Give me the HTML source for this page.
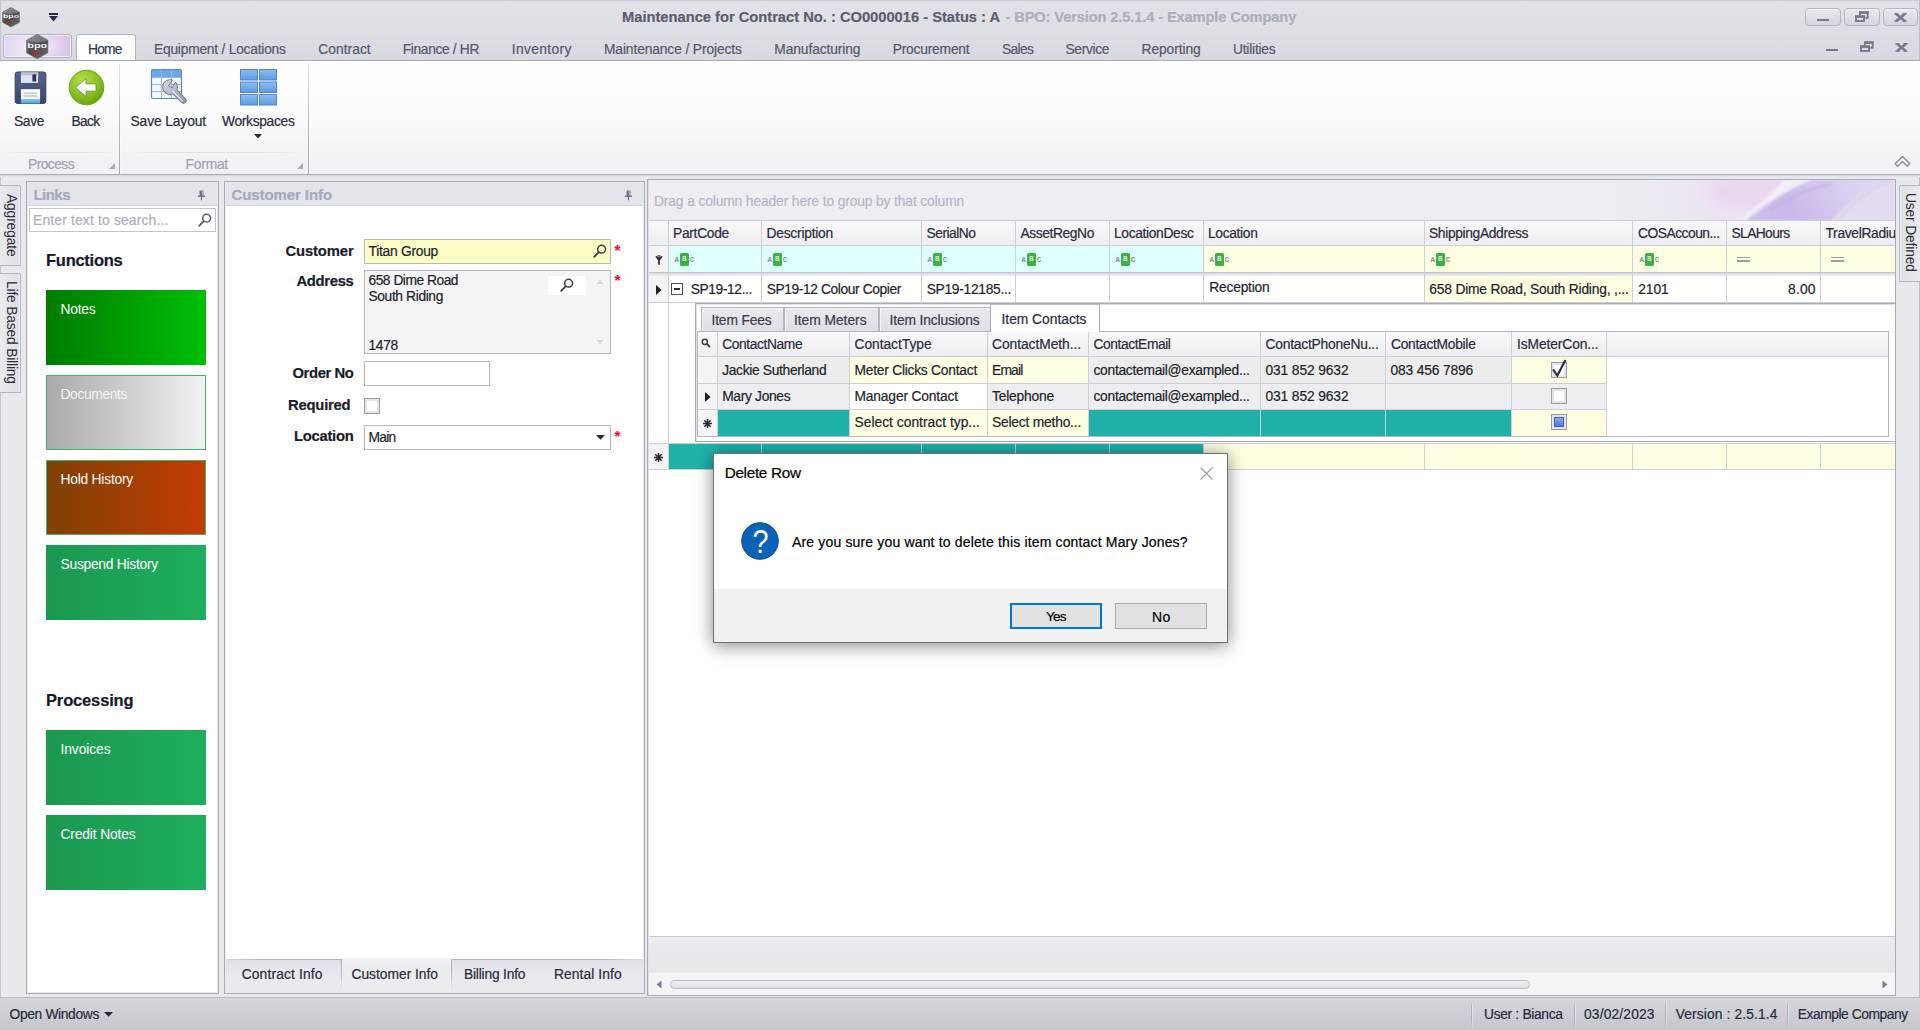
<!DOCTYPE html>
<html><head><meta charset="utf-8"><title>Maintenance for Contract</title>
<style>
*{box-sizing:border-box;margin:0;padding:0}
html,body{width:1920px;height:1030px;overflow:hidden}
body{position:relative;background:#e8e9ed;font-family:"Liberation Sans",sans-serif;font-size:13.3px;color:#1f1f2b;line-height:1}
.a{position:absolute;white-space:nowrap}
.t{position:absolute;white-space:nowrap;line-height:16px;height:16px;-webkit-text-stroke:.2px}
/* SECTION: titlebar */
#title{left:0;top:0;width:1920px;height:61px;background:linear-gradient(#e1e2e7 0,#dedfe4 30px,#d8d9de 60px);border-top:1px solid #c9cad0}
/* SECTION: ribbon */
#ribbon{left:0;top:61px;width:1920px;height:113px;background:linear-gradient(#ffffff 0,#fbfbfc 50px,#eff0f4 113px)}
#ribline{left:0;top:60px;width:1920px;height:1px;background:#a9abb6}
#ribbot{left:0;top:174px;width:1920px;height:1px;background:#a7a9b3}
#ribbot2{left:0;top:175px;width:1920px;height:2px;background:linear-gradient(#d4d5db,#e8e9ed)}
/* SECTION: status */
#status{left:0;top:997px;width:1920px;height:33px;background:linear-gradient(#d6d7dc,#c6c7cd);border-top:1px solid #b9bac2}
</style></head><body>
<div class="a" id="title"></div>
<div class="a" style="left:0px;top:0px;width:1px;height:1030px;background:#c6c7ce"></div><div class="a" style="left:1919px;top:0px;width:1px;height:1030px;background:#c0c1c9"></div><svg class="a" style="left:2px;top:7px" width="18" height="20.5" viewBox="0 0 36 40">
<defs><linearGradient id="h1g" x1="0" y1="0" x2="1" y2="1"><stop offset="0" stop-color="#8a8a8d"/><stop offset=".45" stop-color="#4a4a4d"/><stop offset="1" stop-color="#6b6b6e"/></linearGradient></defs>
<polygon points="18,0.5 35,10 35,30 18,39.5 1,30 1,10" fill="url(#h1g)" stroke="#5c5c60" stroke-width="1"/>
<polygon points="18,0.5 35,10 18,14 1,10" fill="#9a9a9d" opacity=".55"/>
<text x="18" y="22" font-family="Liberation Sans,sans-serif" font-size="11" font-weight="700" fill="#f4f4f4" text-anchor="middle" textLength="32" lengthAdjust="spacingAndGlyphs">bpo</text>
<circle cx="15" cy="29.5" r="3.2" fill="none" stroke="#d8201c" stroke-width="1.6"/>
</svg><div class="a" style="left:49px;top:13px;width:9px;height:2px;background:#2a2a45"></div><svg class="a" style="left:49px;top:15.5px" width="9" height="6" viewBox="0 0 9 6"><path d="M0 0h9L4.5 5.6z" fill="#2a2a45"/></svg><div class="t" style="top:9.0px;left:622.0px;font-size:14.7px;font-weight:700;color:#5b5e70;">Maintenance for Contract No. : CO0000016 - Status : A</div><div class="t" style="top:9.0px;left:1005.5px;font-size:14.7px;font-weight:700;color:#abaebb;letter-spacing:-0.14px;">- BPO: Version 2.5.1.4 - Example Company</div><div class="a" style="left:1805px;top:8px;width:36px;height:18px;border:1px solid #b4b6c0;border-radius:4px;background:linear-gradient(#e9eaee,#d5d6dc);box-shadow:inset 0 1px 0 #f3f3f6"></div><div class="a" style="left:1844px;top:8px;width:36px;height:18px;border:1px solid #b4b6c0;border-radius:4px;background:linear-gradient(#e9eaee,#d5d6dc);box-shadow:inset 0 1px 0 #f3f3f6"></div><div class="a" style="left:1883px;top:8px;width:35px;height:18px;border:1px solid #b4b6c0;border-radius:4px;background:linear-gradient(#e9eaee,#d5d6dc);box-shadow:inset 0 1px 0 #f3f3f6"></div><div class="a" style="left:1817px;top:18.8px;width:12px;height:2.6999999999999993px;background:#767a8c"></div><svg class="a" style="left:1855px;top:10.5px" width="14" height="11" viewBox="0 0 14 11"><path d="M4.900 4V1.500h7.800v5.300h-2.500" fill="none" stroke="#767a8c" stroke-width="1.900"/><rect x="4" y="0.300" width="9.700" height="2.600" fill="#767a8c"/><rect x="1" y="5.500" width="8" height="4.500" fill="none" stroke="#767a8c" stroke-width="1.900"/><rect x="0" y="4.300" width="10" height="2.600" fill="#767a8c"/></svg><svg class="a" style="left:1894.0px;top:12.8px" width="13" height="9" viewBox="0 0 13 9"><path d="M2 0.800L11 8.200M11 0.800L2 8.200" stroke="#767a8c" stroke-width="2.700"/><path d="M0.300 0.800h4M8.700 0.800h4M0.300 8.100h4M8.700 8.100h4" stroke="#767a8c" stroke-width="1.400"/></svg><div class="a" style="left:1826px;top:48.8px;width:12px;height:2.700000000000003px;background:#767a8c"></div><svg class="a" style="left:1860px;top:40.5px" width="14" height="11" viewBox="0 0 14 11"><path d="M4.900 4V1.500h7.800v5.300h-2.500" fill="none" stroke="#767a8c" stroke-width="1.900"/><rect x="4" y="0.300" width="9.700" height="2.600" fill="#767a8c"/><rect x="1" y="5.500" width="8" height="4.500" fill="none" stroke="#767a8c" stroke-width="1.900"/><rect x="0" y="4.300" width="10" height="2.600" fill="#767a8c"/></svg><svg class="a" style="left:1895.0px;top:42.8px" width="13" height="9" viewBox="0 0 13 9"><path d="M2 0.800L11 8.200M11 0.800L2 8.200" stroke="#767a8c" stroke-width="2.700"/><path d="M0.300 0.800h4M8.700 0.800h4M0.300 8.100h4M8.700 8.100h4" stroke="#767a8c" stroke-width="1.400"/></svg><div class="a" style="left:3px;top:34px;width:69px;height:24px;border:1px solid #b2b4c2;border-radius:3px;background:radial-gradient(ellipse 30px 14px at 50% 55%,#f3ecf8 0,rgba(243,236,248,0) 100%),linear-gradient(100deg,#ded4ef 0,#e9e0f4 30%,#e2cfee 70%,#d9c2e8 100%);box-shadow:inset 0 0 0 1px #f1ebf7"></div><svg class="a" style="left:26px;top:34px" width="22.5" height="25" viewBox="0 0 36 40">
<defs><linearGradient id="h2g" x1="0" y1="0" x2="1" y2="1"><stop offset="0" stop-color="#8a8a8d"/><stop offset=".45" stop-color="#4a4a4d"/><stop offset="1" stop-color="#6b6b6e"/></linearGradient></defs>
<polygon points="18,0.5 35,10 35,30 18,39.5 1,30 1,10" fill="url(#h2g)" stroke="#5c5c60" stroke-width="1"/>
<polygon points="18,0.5 35,10 18,14 1,10" fill="#9a9a9d" opacity=".55"/>
<text x="18" y="22" font-family="Liberation Sans,sans-serif" font-size="11" font-weight="700" fill="#f4f4f4" text-anchor="middle" textLength="32" lengthAdjust="spacingAndGlyphs">bpo</text>
<circle cx="15" cy="29.5" r="3.2" fill="none" stroke="#d8201c" stroke-width="1.6"/>
</svg><div class="a" style="left:76px;top:34px;width:60px;height:28px;border:1px solid #b0b2be;border-bottom:none;border-radius:3px 3px 0 0;background:#fff"></div><div class="t" style="top:42.2px;left:88.0px;font-size:13.8px;color:#33375c;letter-spacing:-0.80px;">Home</div><div class="t" style="top:42.2px;left:154.0px;font-size:13.8px;color:#55586b;letter-spacing:-0.23px;">Equipment / Locations</div><div class="t" style="top:42.2px;left:318.3px;font-size:13.8px;color:#55586b;letter-spacing:0.03px;">Contract</div><div class="t" style="top:42.2px;left:402.7px;font-size:13.8px;color:#55586b;letter-spacing:-0.35px;">Finance / HR</div><div class="t" style="top:42.2px;left:511.7px;font-size:13.8px;color:#55586b;letter-spacing:0.36px;">Inventory</div><div class="t" style="top:42.2px;left:604.0px;font-size:13.8px;color:#55586b;letter-spacing:-0.12px;">Maintenance / Projects</div><div class="t" style="top:42.2px;left:774.3px;font-size:13.8px;color:#55586b;letter-spacing:-0.10px;">Manufacturing</div><div class="t" style="top:42.2px;left:892.7px;font-size:13.8px;color:#55586b;letter-spacing:-0.20px;">Procurement</div><div class="t" style="top:42.2px;left:1002.0px;font-size:13.8px;color:#55586b;letter-spacing:-0.64px;">Sales</div><div class="t" style="top:42.2px;left:1065.5px;font-size:13.8px;color:#55586b;letter-spacing:-0.36px;">Service</div><div class="t" style="top:42.2px;left:1141.5px;font-size:13.8px;color:#55586b;letter-spacing:-0.07px;">Reporting</div><div class="t" style="top:42.2px;left:1233.0px;font-size:13.8px;color:#55586b;letter-spacing:-0.22px;">Utilities</div>
<!-- RIBBON -->
<div class="a" id="ribbon"></div><div class="a" id="ribline"></div><div class="a" id="ribbot"></div><div class="a" id="ribbot2"></div>
<div class="a" style="left:119px;top:63px;width:1px;height:111px;background:linear-gradient(#e4e5ea,#b9bbc5 50%,#a9abb6)"></div><div class="a" style="left:120px;top:63px;width:1px;height:111px;background:linear-gradient(#fff,#f6f6f8)"></div><div class="a" style="left:308px;top:63px;width:1px;height:111px;background:linear-gradient(#e4e5ea,#b9bbc5 50%,#a9abb6)"></div><div class="a" style="left:309px;top:63px;width:1px;height:111px;background:linear-gradient(#fff,#f6f6f8)"></div><div class="a" style="left:6px;top:152px;width:108px;height:1px;background:linear-gradient(90deg,rgba(225,226,232,0),#e1e2e8 20%,#e1e2e8 80%,rgba(225,226,232,0))"></div><div class="a" style="left:126px;top:152px;width:177px;height:1px;background:linear-gradient(90deg,rgba(225,226,232,0),#e1e2e8 20%,#e1e2e8 80%,rgba(225,226,232,0))"></div><div class="t" style="top:156.7px;left:28.0px;font-size:13.8px;color:#9ea2b3;letter-spacing:-0.55px;">Process</div><div class="t" style="top:156.7px;left:185.6px;font-size:13.8px;color:#9ea2b3;letter-spacing:-0.22px;">Format</div><svg class="a" style="left:109px;top:163px" width="6" height="6" viewBox="0 0 6 6"><path d="M6 0v6H0z" fill="#a6a9b6"/></svg><svg class="a" style="left:297px;top:163px" width="6" height="6" viewBox="0 0 6 6"><path d="M6 0v6H0z" fill="#a6a9b6"/></svg><div class="t" style="top:114.2px;left:14.0px;font-size:13.8px;color:#2b2b3a;letter-spacing:-0.36px;">Save</div><div class="t" style="top:114.2px;left:71.5px;font-size:13.8px;color:#2b2b3a;letter-spacing:-0.67px;">Back</div><div class="t" style="top:114.2px;left:130.5px;font-size:13.8px;color:#2b2b3a;letter-spacing:-0.11px;">Save Layout</div><div class="t" style="top:114.2px;left:222.0px;font-size:13.8px;color:#2b2b3a;letter-spacing:-0.32px;">Workspaces</div><svg class="a" style="left:254px;top:134px" width="8" height="5" viewBox="0 0 8 5"><path d="M0 0h8L4 4.6z" fill="#2a2a3a"/></svg><svg class="a" style="left:13.500px;top:70.500px" width="33" height="33.500" viewBox="0 0 34 35">
<defs><linearGradient id="fl" x1="0" y1="0" x2="0" y2="1"><stop offset="0" stop-color="#56658c"/><stop offset="1" stop-color="#39456a"/></linearGradient>
<linearGradient id="fl2" x1="0" y1="0" x2="0" y2="1"><stop offset="0" stop-color="#fff"/><stop offset=".7" stop-color="#eef3fb"/><stop offset=".72" stop-color="#7cc0ec"/><stop offset="1" stop-color="#4aa3df"/></linearGradient></defs>
<rect x="1" y="1" width="32" height="33" rx="2.5" fill="url(#fl)" stroke="#303b5e" stroke-width="1"/>
<rect x="7" y="1.5" width="18" height="11" fill="#dfe3ee"/><rect x="7" y="1.5" width="18" height="3" fill="#b9c0d4"/>
<rect x="19" y="3.5" width="4" height="7.5" fill="#2b3556"/>
<rect x="7" y="19" width="20" height="15" fill="url(#fl2)"/>
<rect x="10" y="22.5" width="14" height="1.2" fill="#aab6d0"/><rect x="10" y="25.5" width="14" height="1.2" fill="#aab6d0"/>
</svg><svg class="a" style="left:68px;top:69px" width="37" height="37" viewBox="0 0 37 37">
<defs><radialGradient id="bk" cx=".4" cy=".3" r=".8"><stop offset="0" stop-color="#b9e04a"/><stop offset=".6" stop-color="#86bd24"/><stop offset="1" stop-color="#5f9a12"/></radialGradient></defs>
<circle cx="18.5" cy="18.5" r="17.3" fill="url(#bk)" stroke="#6fa51b" stroke-width="1"/>
<path d="M7.5 18.5L18 9.5v5.3h8.5c1 0 1.5.5 1.5 1.5v4.4c0 1-.5 1.5-1.5 1.5H18v5.3z" fill="#f6fbff" stroke="#5d8f15" stroke-width=".8"/>
</svg><svg class="a" style="left:150px;top:68px" width="38" height="38" viewBox="0 0 38 38">
<defs><linearGradient id="wr" gradientUnits="userSpaceOnUse" x1="12" y1="10" x2="34" y2="34"><stop offset="0" stop-color="#d9dde6"/><stop offset="1" stop-color="#8e96a8"/></linearGradient></defs>
<rect x="1.5" y="1.5" width="30" height="29" rx="1.5" fill="#f4f7fc" stroke="#5d86c8" stroke-width="1.2"/>
<rect x="2" y="2" width="29" height="7" fill="#6ea6e8"/>
<path d="M11.5 2v28M21.5 2v28M2 9.5h29M2 16.5h29M2 23.500h29" stroke="#9bb8e2" stroke-width="1" fill="none"/>
<g transform="translate(0,1)"><path d="M24 22L33.500 31.500" stroke="#6b7388" stroke-width="6.400" stroke-linecap="round" fill="none"/>
<path d="M25.700 13.900A7 7 0 1 1 21.900 11.300L18.100 16.700L21.900 19.300Z" fill="#6b7388" stroke="#6b7388" stroke-width="1.600" stroke-linejoin="round"/>
<path d="M24 22L33.500 31.500" stroke="url(#wr)" stroke-width="4.800" stroke-linecap="round" fill="none"/>
<path d="M25.700 13.900A7 7 0 1 1 21.900 11.300L18.100 16.700L21.900 19.300Z" fill="url(#wr)"/>
<path d="M22.500 22L32.500 32" stroke="#f2f4f8" stroke-width="1.200" stroke-linecap="round" fill="none" opacity=".75"/></g>
</svg><svg class="a" style="left:240px;top:69px" width="37" height="37" viewBox="0 0 37 37">
<defs><linearGradient id="ws" x1="0" y1="0" x2="0" y2="1"><stop offset="0" stop-color="#8dbcf0"/><stop offset="1" stop-color="#5c9be2"/></linearGradient></defs><rect x="0.5" y="0.5" width="17" height="10.500" fill="url(#ws)" stroke="#4f86cf" stroke-width="1"/><rect x="19.5" y="0.5" width="17" height="10.500" fill="url(#ws)" stroke="#4f86cf" stroke-width="1"/><rect x="0.5" y="13.0" width="17" height="10.500" fill="url(#ws)" stroke="#4f86cf" stroke-width="1"/><rect x="19.5" y="13.0" width="17" height="10.500" fill="url(#ws)" stroke="#4f86cf" stroke-width="1"/><rect x="0.5" y="25.5" width="17" height="10.500" fill="url(#ws)" stroke="#4f86cf" stroke-width="1"/><rect x="19.5" y="25.5" width="17" height="10.500" fill="url(#ws)" stroke="#4f86cf" stroke-width="1"/></svg><svg class="a" style="left:1894px;top:154.500px" width="17" height="13" viewBox="0 0 17 13"><path d="M1.200 8.800L8.500 1.500L15.800 8.800L13.300 11.300L8.500 6.500L3.700 11.300Z" fill="#f6f6f9" stroke="#8e90a0" stroke-width="1.500" stroke-linejoin="round"/></svg>
<div class="a" style="left:0px;top:185px;width:21px;height:81px;border:1px solid #b4b6c1;border-left:none;background:linear-gradient(90deg,#e9eaee,#dfe0e6);box-shadow:inset -1px 0 0 #f2f2f5"></div><div class="a" style="left:18.5px;top:194.0px;transform-origin:0 0;transform:rotate(90deg);font-size:13.8px;line-height:16px;height:16px;letter-spacing:-0.13px;color:#2b2b3a">Aggregate</div><div class="a" style="left:0px;top:273px;width:21px;height:120px;border:1px solid #b4b6c1;border-left:none;background:linear-gradient(90deg,#e9eaee,#dfe0e6);box-shadow:inset -1px 0 0 #f2f2f5"></div><div class="a" style="left:18.5px;top:281.0px;transform-origin:0 0;transform:rotate(90deg);font-size:13.8px;line-height:16px;height:16px;letter-spacing:-0.17px;color:#2b2b3a">Life Based Billing</div><div class="a" style="left:1899px;top:185px;width:21px;height:97px;border:1px solid #b4b6c1;border-right:none;background:linear-gradient(90deg,#dfe0e6,#e9eaee);box-shadow:inset 1px 0 0 #f2f2f5"></div><div class="a" style="left:1917.5px;top:193.0px;transform-origin:0 0;transform:rotate(90deg);font-size:13.8px;line-height:16px;height:16px;letter-spacing:-0.15px;color:#2b2b3a">User Defined</div>
<div class="a" style="left:26px;top:181px;width:193px;height:813px;border:1px solid #a9abb6;background:#fff;box-shadow:inset 0 0 0 1px #e9eaee"></div><div class="a" style="left:28px;top:183px;width:189px;height:23px;background:#e4e5ea;border-bottom:1px solid #d5d6dd"></div><div class="t" style="top:187.0px;left:33.5px;font-size:15px;font-weight:700;color:#a3a9c0;letter-spacing:-0.54px;">Links</div><svg class="a" style="left:197px;top:189.5px" width="9" height="11" viewBox="0 0 9 11"><path d="M2.500 0.500h4v5h1.500v1.500H1V5.500h1.500z" fill="#70748a"/><path d="M4.500 7v3.500" stroke="#70748a" stroke-width="1.200"/><path d="M5.500 1v4.500" stroke="#b9bccb" stroke-width="1"/></svg><div class="a" style="left:29px;top:208px;width:187px;height:24px;border:1px solid #c3c5ce;background:#fff"></div><div class="t" style="top:212.7px;left:33.0px;font-size:13.8px;color:#aaaec1;letter-spacing:0.19px;">Enter text to search...</div><svg class="a" style="left:198px;top:213px" width="14" height="14" viewBox="0 0 14 14"><circle cx="8.600" cy="5.200" r="3.900" fill="none" stroke="#55586b" stroke-width="1.500"/><path d="M5.800 8.200L1.200 12.800" stroke="#55586b" stroke-width="1.800" stroke-linecap="round"/></svg><div class="t" style="top:252.0px;left:46.0px;font-size:16.5px;font-weight:700;color:#17172e;letter-spacing:-0.26px;">Functions</div><div class="t" style="top:692.0px;left:46.0px;font-size:16.5px;font-weight:700;color:#17172e;letter-spacing:-0.15px;">Processing</div><div class="a" style="left:46px;top:290px;width:160px;height:75px;background:linear-gradient(90deg,#007b00,#00bf06);"></div><div class="t" style="top:302.0px;left:60.5px;font-size:13.8px;color:#fff;letter-spacing:-0.21px;-webkit-text-stroke:0">Notes</div><div class="a" style="left:46px;top:375px;width:160px;height:75px;background:linear-gradient(90deg,#a9a9a9,#f2f2f2);border:1px solid #3cb371;"></div><div class="t" style="top:387.0px;left:60.5px;font-size:13.8px;color:#f4f4f4;letter-spacing:-0.36px;-webkit-text-stroke:0">Documents</div><div class="a" style="left:46px;top:460px;width:160px;height:75px;background:linear-gradient(90deg,#7d4105,#c43c02);border:1px solid #3cb371;"></div><div class="t" style="top:472.0px;left:60.5px;font-size:13.8px;color:#fff;letter-spacing:-0.22px;-webkit-text-stroke:0">Hold History</div><div class="a" style="left:46px;top:545px;width:160px;height:75px;background:linear-gradient(90deg,#1c9850,#1eae5e);"></div><div class="t" style="top:557.0px;left:60.5px;font-size:13.8px;color:#fff;letter-spacing:-0.25px;-webkit-text-stroke:0">Suspend History</div><div class="a" style="left:46px;top:730px;width:160px;height:75px;background:linear-gradient(90deg,#1c9850,#1eae5e);"></div><div class="t" style="top:742.0px;left:60.5px;font-size:13.8px;color:#fff;letter-spacing:-0.08px;-webkit-text-stroke:0">Invoices</div><div class="a" style="left:46px;top:815px;width:160px;height:75px;background:linear-gradient(90deg,#1c9850,#1eae5e);"></div><div class="t" style="top:827.0px;left:60.5px;font-size:13.8px;color:#fff;letter-spacing:-0.14px;-webkit-text-stroke:0">Credit Notes</div>
<div class="a" style="left:224px;top:181px;width:421px;height:813px;border:1px solid #a9abb6;background:#fff;box-shadow:inset 0 0 0 1px #e9eaee"></div><div class="a" style="left:226px;top:183px;width:417px;height:23px;background:#e4e5ea;border-bottom:1px solid #d5d6dd"></div><div class="t" style="top:187.0px;left:231.5px;font-size:15px;font-weight:700;color:#a3a9c0;letter-spacing:-0.09px;">Customer Info</div><svg class="a" style="left:624px;top:189.5px" width="9" height="11" viewBox="0 0 9 11"><path d="M2.500 0.500h4v5h1.500v1.500H1V5.500h1.500z" fill="#70748a"/><path d="M4.500 7v3.500" stroke="#70748a" stroke-width="1.200"/><path d="M5.500 1v4.500" stroke="#b9bccb" stroke-width="1"/></svg><div class="t" style="top:242.8px;left:285.5px;font-size:14.8px;font-weight:700;color:#1b1b2b;letter-spacing:-0.13px;">Customer</div><div class="t" style="top:272.8px;left:296.5px;font-size:14.8px;font-weight:700;color:#1b1b2b;letter-spacing:-0.32px;">Address</div><div class="t" style="top:364.8px;left:292.5px;font-size:14.8px;font-weight:700;color:#1b1b2b;letter-spacing:-0.39px;">Order No</div><div class="t" style="top:397.3px;left:288.0px;font-size:14.8px;font-weight:700;color:#1b1b2b;letter-spacing:-0.21px;">Required</div><div class="t" style="top:428.3px;left:294.0px;font-size:14.8px;font-weight:700;color:#1b1b2b;letter-spacing:-0.27px;">Location</div><div class="a" style="left:364px;top:239px;width:247px;height:25px;border:1px solid #b4b6c1;background:#fbfbc4"></div><div class="t" style="top:244.2px;left:368.5px;font-size:13.8px;color:#1f1f2b;letter-spacing:-0.26px;">Titan Group</div><svg class="a" style="left:593px;top:244px" width="14" height="14" viewBox="0 0 14 14"><circle cx="8.600" cy="5.200" r="3.900" fill="none" stroke="#3b3b4b" stroke-width="1.500"/><path d="M5.800 8.200L1.200 12.800" stroke="#3b3b4b" stroke-width="1.800" stroke-linecap="round"/></svg><div class="t" style="left:614.5px;top:242.3px;color:#ee1133;font-weight:700;font-size:15px">*</div><div class="a" style="left:364px;top:270px;width:247px;height:84px;border:1px solid #b4b6c1;background:#f4f4f7"></div><div class="t" style="top:272.7px;left:368.5px;font-size:13.8px;letter-spacing:-0.49px;">658 Dime Road</div><div class="t" style="top:289.2px;left:368.5px;font-size:13.8px;letter-spacing:-0.38px;">South Riding</div><div class="t" style="top:337.7px;left:368.5px;font-size:13.8px;letter-spacing:-0.30px;">1478</div><div class="a" style="left:547.5px;top:275.5px;width:38.5px;height:19.0px;background:#fff"></div><svg class="a" style="left:559.5px;top:277.5px" width="14" height="14" viewBox="0 0 14 14"><circle cx="8.600" cy="5.200" r="3.900" fill="none" stroke="#3b3b4b" stroke-width="1.500"/><path d="M5.800 8.200L1.200 12.800" stroke="#3b3b4b" stroke-width="1.800" stroke-linecap="round"/></svg><svg class="a" style="left:595.500px;top:279.500px" width="8" height="4" viewBox="0 0 8 4"><path d="M0 4h8L4 0z" fill="#d2d3da"/></svg><svg class="a" style="left:595.500px;top:340px" width="8" height="4" viewBox="0 0 8 4"><path d="M0 0h8L4 4z" fill="#d2d3da"/></svg><div class="t" style="left:614.5px;top:271.8px;color:#ee1133;font-weight:700;font-size:15px">*</div><div class="a" style="left:364px;top:361px;width:126px;height:25px;border:1px solid #b4b6c1;background:#fff"></div><div class="a" style="left:364px;top:398px;width:16px;height:16px;border:1px solid #9b9dab;background:#fff;box-shadow:inset 0 0 0 2px #e4e5ea"></div><div class="a" style="left:364px;top:425px;width:247px;height:25px;border:1px solid #b4b6c1;background:#fff"></div><div class="t" style="top:430.2px;left:368.5px;font-size:13.8px;letter-spacing:-0.73px;">Main</div><svg class="a" style="left:596px;top:435px" width="9" height="5" viewBox="0 0 9 5"><path d="M0 0h9L4.500 4.800z" fill="#2a2a3a"/></svg><div class="t" style="left:614.5px;top:427.8px;color:#ee1133;font-weight:700;font-size:15px">*</div><div class="a" style="left:226px;top:959px;width:417px;height:33px;background:linear-gradient(#dddee4,#e6e7ec 10px,#e9eaee 20px)"></div><div class="a" style="left:226px;top:959px;width:116px;height:1px;background:linear-gradient(90deg,rgba(180,182,193,0),#b0b2be 30px,#b0b2be)"></div><div class="a" style="left:451px;top:959px;width:192px;height:1px;background:linear-gradient(90deg,#b0b2be,#b0b2be 150px,rgba(180,182,193,0))"></div><div class="a" style="left:342px;top:958px;width:109px;height:34px;background:linear-gradient(#f2f2f5,#ecedf0 8px,#ebecef)"></div><div class="a" style="left:341px;top:959px;width:1px;height:30px;background:linear-gradient(#b0b2be,#b0b2be 40%,rgba(176,178,190,0))"></div><div class="a" style="left:451px;top:959px;width:1px;height:30px;background:linear-gradient(#b0b2be,#b0b2be 40%,rgba(176,178,190,0))"></div><div class="t" style="top:966.7px;left:241.7px;font-size:13.8px;color:#2b2b3a;letter-spacing:0.15px;">Contract Info</div><div class="t" style="top:966.7px;left:351.5px;font-size:13.8px;color:#2b2b3a;letter-spacing:-0.01px;">Customer Info</div><div class="t" style="top:966.7px;left:464.0px;font-size:13.8px;color:#2b2b3a;letter-spacing:-0.20px;">Billing Info</div><div class="t" style="top:966.7px;left:554.0px;font-size:13.8px;color:#2b2b3a;letter-spacing:0.09px;">Rental Info</div>
<div class="a" style="left:647px;top:179px;width:1249px;height:817px;border:1px solid #a9abb6;background:#fff;box-shadow:inset 1px 0 0 #dfe0e5"></div><div class="a" style="left:649px;top:180px;width:1246px;height:41px;background:linear-gradient(90deg,#eeeef2 0,#eeeef2 76%,#ece6f1 84%,#eadff0 90%,#e4dcf0 100%)"></div><svg class="a" style="left:1600px;top:180px" width="295" height="41" viewBox="0 0 295 41"><defs><filter id="bl" x="-10%" y="-30%" width="120%" height="160%"><feGaussianBlur stdDeviation="1.600"/></filter><filter id="bl2" x="-20%" y="-50%" width="140%" height="200%"><feGaussianBlur stdDeviation="7"/></filter>
<linearGradient id="pb" x1="0" y1=".6" x2="1" y2=".4"><stop offset="0" stop-color="#cdc0ec"/><stop offset=".3" stop-color="#c9b9ea"/><stop offset=".75" stop-color="#d9cfef"/><stop offset="1" stop-color="#e0d8f1"/></linearGradient></defs>
<ellipse cx="160" cy="12" rx="55" ry="16" fill="#ead6ee" opacity=".9" filter="url(#bl2)"/>
<g filter="url(#bl)"><path d="M134 42C156 28 174 12 184 -1H218C192 12 172 28 158 42z" fill="#f1f0f6"/>
<path d="M144 42C168 22 190 8 214 -1H295V42z" fill="#e3dbf0"/>
<path d="M144 42C168 22 190 8 214 -1H286C262 10 245 24 231 42z" fill="url(#pb)"/>
<path d="M170 30C190 16 210 8 232 4" stroke="#bfaee6" stroke-width="3" fill="none" opacity=".7"/>
<path d="M238 42C252 24 268 10 290 0" stroke="#d6c8ec" stroke-width="2" fill="none" opacity=".8"/></g></svg><div class="t" style="top:194.2px;left:654.0px;font-size:13.8px;color:#b4b7c6;letter-spacing:-0.12px;">Drag a column header here to group by that column</div><div class="a" style="left:649px;top:220px;width:1246px;height:1px;background:#cdced6"></div><div class="a" style="left:649px;top:221px;width:1246px;height:24px;background:linear-gradient(#f8f8fa,#eeeef2)"></div><div class="a" style="left:649px;top:245px;width:1246px;height:1px;background:#cdced6"></div><div class="t" style="top:225.7px;left:673.0px;font-size:13.8px;color:#2b2b3a;letter-spacing:-0.29px;">PartCode</div><div class="t" style="top:225.7px;left:766.5px;font-size:13.8px;color:#2b2b3a;letter-spacing:-0.23px;">Description</div><div class="t" style="top:225.7px;left:926.5px;font-size:13.8px;color:#2b2b3a;letter-spacing:-0.49px;">SerialNo</div><div class="t" style="top:225.7px;left:1020.5px;font-size:13.8px;color:#2b2b3a;letter-spacing:-0.40px;">AssetRegNo</div><div class="t" style="top:225.7px;left:1114.0px;font-size:13.8px;color:#2b2b3a;letter-spacing:-0.34px;">LocationDesc</div><div class="t" style="top:225.7px;left:1208.0px;font-size:13.8px;color:#2b2b3a;letter-spacing:-0.33px;">Location</div><div class="t" style="top:225.7px;left:1429.0px;font-size:13.8px;color:#2b2b3a;letter-spacing:-0.35px;">ShippingAddress</div><div class="t" style="top:225.7px;left:1638.0px;font-size:13.8px;color:#2b2b3a;letter-spacing:-0.49px;">COSAccoun...</div><div class="t" style="top:225.7px;left:1731.5px;font-size:13.8px;color:#2b2b3a;letter-spacing:-0.61px;">SLAHours</div><div class="a" style="left:1821px;top:221px;width:74px;height:24px;overflow:hidden"><div class="t" style="left:4.5px;top:4.700px;font-size:13.8px;color:#2b2b3a;letter-spacing:-0.31px">TravelRadius</div></div><div class="a" style="left:649px;top:246px;width:19px;height:26px;background:#f4f4f7"></div><div class="a" style="left:669px;top:246px;width:534px;height:26px;background:#dffefe"></div><div class="a" style="left:1203px;top:246px;width:692px;height:26px;background:#fefee2"></div><div class="a" style="left:649px;top:272px;width:1246px;height:1px;background:#c2c3cc"></div><div class="a" style="left:649px;top:273px;width:1246px;height:3px;background:linear-gradient(#d9dae0,#ededf1)"></div><div class="a" style="left:674.5px;top:255.5px;font:700 7.5px/8px 'Liberation Mono',monospace;color:#8b8d95">A</div><div class="a" style="left:680.0px;top:252.5px;width:8.500px;height:13.500px;border-radius:1.5px;background:#3cb043;color:#d9f5da;font:700 7.5px/13.5px 'Liberation Mono',monospace;text-align:center">B</div><div class="a" style="left:689.8px;top:255.5px;font:700 7.5px/8px 'Liberation Mono',monospace;color:#8b8d95">C</div><div class="a" style="left:767.5px;top:255.5px;font:700 7.5px/8px 'Liberation Mono',monospace;color:#8b8d95">A</div><div class="a" style="left:773.0px;top:252.5px;width:8.500px;height:13.500px;border-radius:1.5px;background:#3cb043;color:#d9f5da;font:700 7.5px/13.5px 'Liberation Mono',monospace;text-align:center">B</div><div class="a" style="left:782.8px;top:255.5px;font:700 7.5px/8px 'Liberation Mono',monospace;color:#8b8d95">C</div><div class="a" style="left:927.5px;top:255.5px;font:700 7.5px/8px 'Liberation Mono',monospace;color:#8b8d95">A</div><div class="a" style="left:933.0px;top:252.5px;width:8.500px;height:13.500px;border-radius:1.5px;background:#3cb043;color:#d9f5da;font:700 7.5px/13.5px 'Liberation Mono',monospace;text-align:center">B</div><div class="a" style="left:942.8px;top:255.5px;font:700 7.5px/8px 'Liberation Mono',monospace;color:#8b8d95">C</div><div class="a" style="left:1021.5px;top:255.5px;font:700 7.5px/8px 'Liberation Mono',monospace;color:#8b8d95">A</div><div class="a" style="left:1027.0px;top:252.5px;width:8.500px;height:13.500px;border-radius:1.5px;background:#3cb043;color:#d9f5da;font:700 7.5px/13.5px 'Liberation Mono',monospace;text-align:center">B</div><div class="a" style="left:1036.8px;top:255.5px;font:700 7.5px/8px 'Liberation Mono',monospace;color:#8b8d95">C</div><div class="a" style="left:1115.5px;top:255.5px;font:700 7.5px/8px 'Liberation Mono',monospace;color:#8b8d95">A</div><div class="a" style="left:1121.0px;top:252.5px;width:8.500px;height:13.500px;border-radius:1.5px;background:#3cb043;color:#d9f5da;font:700 7.5px/13.5px 'Liberation Mono',monospace;text-align:center">B</div><div class="a" style="left:1130.8px;top:255.5px;font:700 7.5px/8px 'Liberation Mono',monospace;color:#8b8d95">C</div><div class="a" style="left:1209.5px;top:255.5px;font:700 7.5px/8px 'Liberation Mono',monospace;color:#8b8d95">A</div><div class="a" style="left:1215.0px;top:252.5px;width:8.500px;height:13.500px;border-radius:1.5px;background:#3cb043;color:#d9f5da;font:700 7.5px/13.5px 'Liberation Mono',monospace;text-align:center">B</div><div class="a" style="left:1224.8px;top:255.5px;font:700 7.5px/8px 'Liberation Mono',monospace;color:#8b8d95">C</div><div class="a" style="left:1430.5px;top:255.5px;font:700 7.5px/8px 'Liberation Mono',monospace;color:#8b8d95">A</div><div class="a" style="left:1436.0px;top:252.5px;width:8.500px;height:13.500px;border-radius:1.5px;background:#3cb043;color:#d9f5da;font:700 7.5px/13.5px 'Liberation Mono',monospace;text-align:center">B</div><div class="a" style="left:1445.8px;top:255.5px;font:700 7.5px/8px 'Liberation Mono',monospace;color:#8b8d95">C</div><div class="a" style="left:1639.5px;top:255.5px;font:700 7.5px/8px 'Liberation Mono',monospace;color:#8b8d95">A</div><div class="a" style="left:1645.0px;top:252.5px;width:8.500px;height:13.500px;border-radius:1.5px;background:#3cb043;color:#d9f5da;font:700 7.5px/13.5px 'Liberation Mono',monospace;text-align:center">B</div><div class="a" style="left:1654.8px;top:255.5px;font:700 7.5px/8px 'Liberation Mono',monospace;color:#8b8d95">C</div><div class="a" style="left:1737px;top:257px;width:13px;height:1.3000000000000114px;background:#9a9ca6"></div><div class="a" style="left:1737px;top:260.3px;width:13px;height:1.3000000000000114px;background:#9a9ca6"></div><div class="a" style="left:1831px;top:257px;width:13px;height:1.3000000000000114px;background:#9a9ca6"></div><div class="a" style="left:1831px;top:260.3px;width:13px;height:1.3000000000000114px;background:#9a9ca6"></div><svg class="a" style="left:654.500px;top:254.500px" width="8" height="10" viewBox="0 0 8 10"><path d="M0.300 1.800Q4 -1.200 7.700 1.800L4.900 5.200V9.800H3.100V5.200Z" fill="#2b2b3a"/><ellipse cx="4" cy="1.700" rx="2" ry="0.600" fill="#9a9cab"/></svg><div class="a" style="left:649px;top:276px;width:19px;height:26px;background:#f4f4f7"></div><div class="a" style="left:1424px;top:276px;width:208px;height:26px;background:#fefee2"></div><div class="a" style="left:649px;top:302px;width:1246px;height:1px;background:#cdced6"></div><svg class="a" style="left:656px;top:284.5px" width="6" height="10" viewBox="0 0 6 10"><path d="M0 0v10L5.600 5z" fill="#1f1f2b"/></svg><div class="a" style="left:671px;top:283px;width:12px;height:12px;border:1.3px solid #4b4b5b;background:#fff"></div><div class="a" style="left:674px;top:288.3px;width:6px;height:1.5px;background:#2b2b3a"></div><div class="t" style="top:282.2px;left:690.7px;font-size:13.8px;letter-spacing:-0.39px;">SP19-12...</div><div class="t" style="top:282.2px;left:766.7px;font-size:13.8px;letter-spacing:-0.40px;">SP19-12 Colour Copier</div><div class="t" style="top:282.2px;left:926.7px;font-size:13.8px;letter-spacing:-0.30px;">SP19-12185...</div><div class="t" style="top:279.7px;left:1209.3px;font-size:13.8px;letter-spacing:-0.22px;">Reception</div><div class="t" style="top:282.2px;left:1429.3px;font-size:13.8px;letter-spacing:-0.19px;">658 Dime Road, South Riding, ,...</div><div class="t" style="top:282.2px;left:1638.3px;font-size:13.8px;letter-spacing:-0.13px;">2101</div><div class="t" style="top:282.2px;left:1788.0px;font-size:13.8px;letter-spacing:0.21px;">8.00</div><div class="a" style="left:649px;top:303px;width:19px;height:140px;background:#fff"></div><div class="a" style="left:668px;top:221px;width:1px;height:81px;background:#cdced6"></div><div class="a" style="left:761px;top:221px;width:1px;height:81px;background:#cdced6"></div><div class="a" style="left:921px;top:221px;width:1px;height:81px;background:#cdced6"></div><div class="a" style="left:1015px;top:221px;width:1px;height:81px;background:#cdced6"></div><div class="a" style="left:1109px;top:221px;width:1px;height:81px;background:#cdced6"></div><div class="a" style="left:1203px;top:221px;width:1px;height:81px;background:#cdced6"></div><div class="a" style="left:1424px;top:221px;width:1px;height:81px;background:#cdced6"></div><div class="a" style="left:1632px;top:221px;width:1px;height:81px;background:#cdced6"></div><div class="a" style="left:1726px;top:221px;width:1px;height:81px;background:#cdced6"></div><div class="a" style="left:1820px;top:221px;width:1px;height:81px;background:#cdced6"></div><div class="a" style="left:668px;top:302px;width:1px;height:141px;background:#cdced6"></div><div class="a" style="left:695px;top:303px;width:1200px;height:139px;border:1px solid #a9abb6;border-right:none;background:#fff;box-shadow:inset 1px 1px 0 #dfe0e5"></div><div class="a" style="left:701px;top:307px;width:83px;height:25px;border:1px solid #b4b6c1;border-bottom:none;background:linear-gradient(#eaeaee,#dcdde3);box-shadow:inset 1px 1px 0 #f4f4f7"></div><div class="a" style="left:784px;top:307px;width:95px;height:25px;border:1px solid #b4b6c1;border-bottom:none;background:linear-gradient(#eaeaee,#dcdde3);box-shadow:inset 1px 1px 0 #f4f4f7"></div><div class="a" style="left:879px;top:307px;width:112px;height:25px;border:1px solid #b4b6c1;border-bottom:none;background:linear-gradient(#eaeaee,#dcdde3);box-shadow:inset 1px 1px 0 #f4f4f7"></div><div class="a" style="left:697px;top:331px;width:1192px;height:1px;background:#b4b6c1"></div><div class="a" style="left:990px;top:304px;width:110px;height:29px;border:1px solid #a9abb6;border-bottom:none;border-top:1px solid #b9bbc5;background:#fff"></div><div class="t" style="top:313.0px;left:711.5px;font-size:13.8px;color:#3b3b4b;letter-spacing:-0.15px;">Item Fees</div><div class="t" style="top:313.0px;left:794.0px;font-size:13.8px;color:#3b3b4b;letter-spacing:-0.03px;">Item Meters</div><div class="t" style="top:313.0px;left:889.5px;font-size:13.8px;color:#3b3b4b;letter-spacing:-0.14px;">Item Inclusions</div><div class="t" style="top:312.0px;left:1001.5px;font-size:13.8px;color:#2b2b3a;letter-spacing:-0.01px;">Item Contacts</div><div class="a" style="left:697px;top:332px;width:1192px;height:105px;border:1px solid #b4b6c1;border-top:none;background:#fff"></div><div class="a" style="left:698px;top:332px;width:1190px;height:24px;background:linear-gradient(#f8f8fa,#eeeef2)"></div><div class="a" style="left:698px;top:356px;width:1190px;height:1px;background:#cdced6"></div><div class="t" style="top:337.2px;left:722.2px;font-size:13.8px;color:#2b2b3a;letter-spacing:-0.39px;">ContactName</div><div class="t" style="top:337.2px;left:854.5px;font-size:13.8px;color:#2b2b3a;letter-spacing:-0.04px;">ContactType</div><div class="t" style="top:337.2px;left:992.0px;font-size:13.8px;color:#2b2b3a;letter-spacing:-0.05px;">ContactMeth...</div><div class="t" style="top:337.2px;left:1093.5px;font-size:13.8px;color:#2b2b3a;letter-spacing:-0.42px;">ContactEmail</div><div class="t" style="top:337.2px;left:1265.5px;font-size:13.8px;color:#2b2b3a;letter-spacing:-0.21px;">ContactPhoneNu...</div><div class="t" style="top:337.2px;left:1391.0px;font-size:13.8px;color:#2b2b3a;letter-spacing:-0.28px;">ContactMobile</div><div class="t" style="top:337.2px;left:1517.0px;font-size:13.8px;color:#2b2b3a;letter-spacing:-0.10px;">IsMeterCon...</div><div class="a" style="left:698px;top:357px;width:19px;height:79px;background:#f4f4f7"></div><div class="a" style="left:718px;top:357px;width:131px;height:26px;background:#ececec"></div><div class="a" style="left:850px;top:357px;width:137px;height:26px;background:#fefee2"></div><div class="a" style="left:988px;top:357px;width:100px;height:26px;background:#fefee2"></div><div class="a" style="left:1089px;top:357px;width:171px;height:26px;background:#ececec"></div><div class="a" style="left:1261px;top:357px;width:124px;height:26px;background:#ececec"></div><div class="a" style="left:1386px;top:357px;width:125px;height:26px;background:#ececec"></div><div class="a" style="left:1512px;top:357px;width:94px;height:26px;background:#fefee2"></div><div class="a" style="left:718px;top:384px;width:131px;height:25px;background:#eeeef1"></div><div class="a" style="left:850px;top:384px;width:137px;height:25px;background:#fff"></div><div class="a" style="left:988px;top:384px;width:100px;height:25px;background:#eeeef1"></div><div class="a" style="left:1089px;top:384px;width:171px;height:25px;background:#eeeef1"></div><div class="a" style="left:1261px;top:384px;width:124px;height:25px;background:#eeeef1"></div><div class="a" style="left:1386px;top:384px;width:125px;height:25px;background:#eeeef1"></div><div class="a" style="left:1512px;top:384px;width:94px;height:25px;background:#eeeef1"></div><div class="a" style="left:718px;top:410px;width:131px;height:26px;background:#20b2aa"></div><div class="a" style="left:850px;top:410px;width:137px;height:26px;background:#fefee2"></div><div class="a" style="left:988px;top:410px;width:100px;height:26px;background:#fefee2"></div><div class="a" style="left:1089px;top:410px;width:171px;height:26px;background:#20b2aa"></div><div class="a" style="left:1261px;top:410px;width:124px;height:26px;background:#20b2aa"></div><div class="a" style="left:1386px;top:410px;width:125px;height:26px;background:#20b2aa"></div><div class="a" style="left:1512px;top:410px;width:94px;height:26px;background:#fefee2"></div><div class="a" style="left:698px;top:383px;width:908px;height:1px;background:#cdced6"></div><div class="a" style="left:698px;top:409px;width:908px;height:1px;background:#cdced6"></div><div class="a" style="left:717px;top:332px;width:1px;height:104px;background:#cdced6"></div><div class="a" style="left:849px;top:332px;width:1px;height:104px;background:#cdced6"></div><div class="a" style="left:987px;top:332px;width:1px;height:104px;background:#cdced6"></div><div class="a" style="left:1088px;top:332px;width:1px;height:104px;background:#cdced6"></div><div class="a" style="left:1260px;top:332px;width:1px;height:104px;background:#cdced6"></div><div class="a" style="left:1385px;top:332px;width:1px;height:104px;background:#cdced6"></div><div class="a" style="left:1511px;top:332px;width:1px;height:104px;background:#cdced6"></div><div class="a" style="left:1606px;top:332px;width:1px;height:104px;background:#cdced6"></div><div class="t" style="top:363.2px;left:722.2px;font-size:13.8px;letter-spacing:-0.33px;">Jackie Sutherland</div><div class="t" style="top:363.2px;left:854.5px;font-size:13.8px;letter-spacing:-0.24px;">Meter Clicks Contact</div><div class="t" style="top:363.2px;left:992.0px;font-size:13.8px;letter-spacing:-0.80px;">Email</div><div class="t" style="top:363.2px;left:1093.5px;font-size:13.8px;letter-spacing:-0.28px;">contactemail@exampled...</div><div class="t" style="top:363.2px;left:1265.5px;font-size:13.8px;letter-spacing:-0.12px;">031 852 9632</div><div class="t" style="top:363.2px;left:1390.5px;font-size:13.8px;letter-spacing:-0.16px;">083 456 7896</div><div class="t" style="top:389.0px;left:722.2px;font-size:13.8px;letter-spacing:-0.32px;">Mary Jones</div><div class="t" style="top:389.0px;left:854.5px;font-size:13.8px;letter-spacing:-0.16px;">Manager Contact</div><div class="t" style="top:389.0px;left:992.0px;font-size:13.8px;letter-spacing:-0.19px;">Telephone</div><div class="t" style="top:389.0px;left:1093.5px;font-size:13.8px;letter-spacing:-0.28px;">contactemail@exampled...</div><div class="t" style="top:389.0px;left:1265.5px;font-size:13.8px;letter-spacing:-0.12px;">031 852 9632</div><div class="t" style="top:415.3px;left:854.5px;font-size:13.8px;letter-spacing:0.02px;">Select contract typ...</div><div class="t" style="top:415.3px;left:992.0px;font-size:13.8px;letter-spacing:-0.20px;">Select metho...</div><svg class="a" style="left:705px;top:391.5px" width="6" height="10" viewBox="0 0 6 10"><path d="M0 0v10L5.600 5z" fill="#1f1f2b"/></svg><svg class="a" style="left:702.5px;top:418.5px" width="9" height="9" viewBox="0 0 9 9"><g stroke="#2b2b3a" stroke-width="1.500"><path d="M4.500 0v9M0 4.500h9M1.300 1.300l6.400 6.400M7.700 1.300L1.300 7.700"/></g></svg><svg class="a" style="left:701px;top:338px" width="10" height="10" viewBox="0 0 10 10"><circle cx="3.800" cy="3.800" r="2.600" fill="none" stroke="#3b3b4b" stroke-width="1.500"/><path d="M5.800 5.800L9 9" stroke="#3b3b4b" stroke-width="1.800"/></svg><div class="a" style="left:1551px;top:361.5px;width:16px;height:16.0px;border:1px solid #9b9dab;background:#fff;box-shadow:inset 0 0 0 2px #e4e5ea"></div><div class="a" style="left:1551px;top:387.5px;width:16px;height:16.0px;border:1px solid #9b9dab;background:#fff;box-shadow:inset 0 0 0 2px #e4e5ea"></div><div class="a" style="left:1551px;top:413.5px;width:16px;height:16.0px;border:1px solid #9b9dab;background:#fff;box-shadow:inset 0 0 0 2px #e4e5ea"></div><svg class="a" style="left:1550px;top:357.500px" width="18" height="20" viewBox="0 0 18 20"><path d="M3 11.500L7.300 17.500L15.500 2" fill="none" stroke="#2b2b3a" stroke-width="2.100"/></svg><div class="a" style="left:1554px;top:416.5px;width:10px;height:10.0px;background:linear-gradient(#89a9ee,#4f78dc);border:1px solid #3d62c4"></div><div class="a" style="left:649px;top:443px;width:1246px;height:1px;background:#cdced6"></div><div class="a" style="left:649px;top:444px;width:19px;height:25px;background:#f4f4f7"></div><div class="a" style="left:669px;top:444px;width:534px;height:25px;background:#20b2aa"></div><div class="a" style="left:1203px;top:444px;width:692px;height:25px;background:#fefee2"></div><div class="a" style="left:668px;top:444px;width:1px;height:25px;background:#cdced6"></div><div class="a" style="left:761px;top:444px;width:1px;height:25px;background:#cdced6"></div><div class="a" style="left:921px;top:444px;width:1px;height:25px;background:#cdced6"></div><div class="a" style="left:1015px;top:444px;width:1px;height:25px;background:#cdced6"></div><div class="a" style="left:1109px;top:444px;width:1px;height:25px;background:#cdced6"></div><div class="a" style="left:1203px;top:444px;width:1px;height:25px;background:#cdced6"></div><div class="a" style="left:1424px;top:444px;width:1px;height:25px;background:#cdced6"></div><div class="a" style="left:1632px;top:444px;width:1px;height:25px;background:#cdced6"></div><div class="a" style="left:1726px;top:444px;width:1px;height:25px;background:#cdced6"></div><div class="a" style="left:1820px;top:444px;width:1px;height:25px;background:#cdced6"></div><div class="a" style="left:649px;top:469px;width:1246px;height:1px;background:#cdced6"></div><svg class="a" style="left:654px;top:452.5px" width="9" height="9" viewBox="0 0 9 9"><g stroke="#2b2b3a" stroke-width="1.500"><path d="M4.500 0v9M0 4.500h9M1.300 1.300l6.400 6.400M7.700 1.300L1.300 7.700"/></g></svg><div class="a" style="left:649px;top:936px;width:1246px;height:1px;background:#c9cad2"></div><div class="a" style="left:649px;top:937px;width:1246px;height:36px;background:linear-gradient(#ececf0,#e6e7eb)"></div><div class="a" style="left:649px;top:973px;width:1246px;height:22px;background:#f4f4f7"></div><div class="a" style="left:670px;top:980px;width:860px;height:9px;border:1px solid #b9bbc6;border-radius:5px;background:linear-gradient(#f2f2f5,#dcdde3)"></div><svg class="a" style="left:656px;top:979.500px" width="6" height="9" viewBox="0 0 6 9"><path d="M5.500 0.500v8L0.500 4.500z" fill="#7b7e90"/></svg><svg class="a" style="left:1882px;top:979.500px" width="6" height="9" viewBox="0 0 6 9"><path d="M0.500 0.500v8L5.500 4.500z" fill="#7b7e90"/></svg>
<div class="a" style="left:713px;top:453px;width:515px;height:190px;border:1px solid #6f6f73;background:#fff;box-shadow:0 0 16px rgba(0,0,0,.3),0 6px 18px rgba(0,0,0,.2)"></div><div class="a" style="left:714px;top:589px;width:513px;height:53px;background:#f0f0f0"></div><div class="t" style="top:465.0px;left:724.7px;font-size:15.3px;color:#000;letter-spacing:-0.31px;">Delete Row</div><svg class="a" style="left:1199.500px;top:467px" width="13" height="13" viewBox="0 0 13 13"><path d="M0.500 0.500L12.500 12.500M12.500 0.500L0.500 12.500" stroke="#9a9a9a" stroke-width="1.100"/></svg><svg class="a" style="left:741px;top:522px" width="38" height="38" viewBox="0 0 38 38"><circle cx="19" cy="19" r="18.300" fill="#0a63b4" stroke="#0a4f93" stroke-width="1"/><text x="22.900" y="31" transform="scale(.85,1)" font-family="Liberation Sans,sans-serif" font-size="34" fill="#fff" text-anchor="middle">?</text></svg><div class="t" style="top:533.5px;left:792.0px;font-size:14px;color:#000;letter-spacing:0.16px;">Are you sure you want to delete this item contact Mary Jones?</div><div class="a" style="left:1010px;top:603px;width:92px;height:26px;border:2px solid #0078d7;background:#e1e1e1"></div><div class="a" style="left:1115px;top:603px;width:92px;height:26px;border:1px solid #adadad;background:#e1e1e1"></div><div class="t" style="top:608.8px;left:1046.0px;font-size:13.5px;color:#000;letter-spacing:-0.80px;">Yes</div><div class="t" style="top:608.8px;left:1152.0px;font-size:14px;color:#000;letter-spacing:0.30px;">No</div>
<div class="a" id="status"></div>
<div class="t" style="top:1007.1px;left:9.5px;font-size:13.8px;color:#2b2b3a;letter-spacing:-0.34px;">Open Windows</div><svg class="a" style="left:104px;top:1011.500px" width="9" height="5" viewBox="0 0 9 5"><path d="M0 0h9L4.500 4.800z" fill="#2a2a3a"/></svg><div class="a" style="left:1471px;top:1000px;width:1px;height:29px;background:linear-gradient(rgba(176,178,190,0),#adafba 30%,#adafba 70%,rgba(176,178,190,0))"></div><div class="a" style="left:1472px;top:1000px;width:1px;height:29px;background:linear-gradient(rgba(226,227,232,0),#e2e3e8 30%,#e2e3e8 70%,rgba(226,227,232,0))"></div><div class="a" style="left:1574px;top:1000px;width:1px;height:29px;background:linear-gradient(rgba(176,178,190,0),#adafba 30%,#adafba 70%,rgba(176,178,190,0))"></div><div class="a" style="left:1575px;top:1000px;width:1px;height:29px;background:linear-gradient(rgba(226,227,232,0),#e2e3e8 30%,#e2e3e8 70%,rgba(226,227,232,0))"></div><div class="a" style="left:1665px;top:1000px;width:1px;height:29px;background:linear-gradient(rgba(176,178,190,0),#adafba 30%,#adafba 70%,rgba(176,178,190,0))"></div><div class="a" style="left:1666px;top:1000px;width:1px;height:29px;background:linear-gradient(rgba(226,227,232,0),#e2e3e8 30%,#e2e3e8 70%,rgba(226,227,232,0))"></div><div class="a" style="left:1787px;top:1000px;width:1px;height:29px;background:linear-gradient(rgba(176,178,190,0),#adafba 30%,#adafba 70%,rgba(176,178,190,0))"></div><div class="a" style="left:1788px;top:1000px;width:1px;height:29px;background:linear-gradient(rgba(226,227,232,0),#e2e3e8 30%,#e2e3e8 70%,rgba(226,227,232,0))"></div><div class="t" style="top:1007.1px;left:1484.0px;font-size:13.8px;color:#2b2b3a;letter-spacing:-0.32px;">User : Bianca</div><div class="t" style="top:1007.1px;left:1584.0px;font-size:13.8px;color:#2b2b3a;letter-spacing:0.16px;">03/02/2023</div><div class="t" style="top:1007.1px;left:1675.7px;font-size:13.8px;color:#2b2b3a;letter-spacing:0.13px;">Version : 2.5.1.4</div><div class="t" style="top:1007.1px;left:1797.7px;font-size:13.8px;color:#2b2b3a;letter-spacing:-0.44px;">Example Company</div>
</body></html>
